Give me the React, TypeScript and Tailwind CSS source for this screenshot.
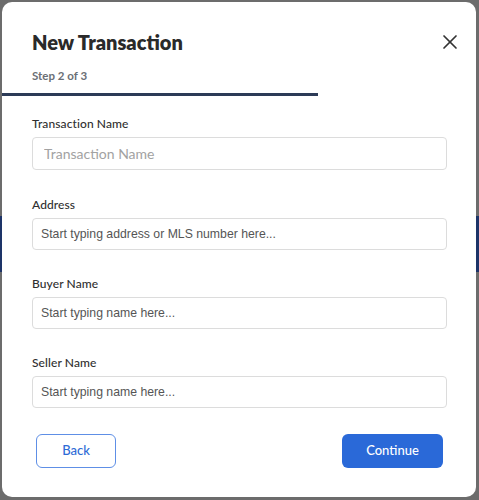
import React from "react";

const Field = ({
  label,
  placeholder,
  first,
  mt,
}: {
  label: string;
  placeholder: string;
  first?: boolean;
  mt: string;
}) => (
  <div className={`flex flex-col ${mt}`}>
    <label className="text-[12px] leading-[18px] font-medium text-[#2f2f2f] font-['Lato',sans-serif] tracking-[0.1px]">
      {label}
    </label>
    <input
      placeholder={placeholder}
      className={
        first
          ? "mt-[4px] h-[33px] w-[415px] rounded-[4px] border border-[#dcdcdc] bg-white px-[11px] text-[14px] font-['Lato',sans-serif] placeholder:text-[#a2a2a2] outline-none"
          : "mt-[4px] h-[32px] w-[415px] rounded-[4px] border border-[#dcdcdc] bg-white px-[8px] text-[12.25px] font-['Liberation_Sans',Arial,sans-serif] placeholder:text-[#555] outline-none"
      }
    />
  </div>
);

export default function App() {
  return (
    <div className="relative w-[479px] h-[500px] overflow-hidden bg-[#6c6c6c]">
      <div className="flex flex-col h-full">
        <div className="h-[216px]" />
        <div className="h-[56px] bg-[#1d3468]" />
        <div className="flex-1" />
      </div>
      <div className="absolute left-[2px] top-[2px] w-[474px] h-[495px] rounded-[10px] bg-white flex flex-col font-['Lato',sans-serif]">
        <div className="flex items-center justify-between pl-[30px] pr-[14px] pt-[26px]">
          <h1 className="text-[20px] leading-[28px] font-extrabold text-[#2a2a2a]">
            New Transaction
          </h1>
          <svg width="24" height="24" viewBox="0 0 24 24" fill="none" stroke="#333" strokeWidth="1.7" strokeLinecap="round">
            <path d="M18 6 6 18" />
            <path d="m6 6 12 12" />
          </svg>
        </div>
        <div className="pl-[30px] mt-[12px] text-[11.5px] leading-[16px] font-bold text-[#6b6f76]">
          Step 2 of 3
        </div>
        <div className="mt-[9px] h-[3px] w-[316px] bg-[#2c3b57]" />
        <div className="pl-[30px] flex flex-col">
          <Field label="Transaction Name" placeholder="Transaction Name" first mt="mt-[19px]" />
          <Field label="Address" placeholder="Start typing address or MLS number here..." mt="mt-[26px]" />
          <Field label="Buyer Name" placeholder="Start typing name here..." mt="mt-[25px]" />
          <Field label="Seller Name" placeholder="Start typing name here..." mt="mt-[25px]" />
        </div>
        <div className="mt-[26px] flex justify-between pl-[34px] pr-[33px]">
          <button className="h-[34px] w-[80px] rounded-[6px] border border-[#5e8fe6] bg-white text-[13px] font-medium text-[#2e6bd6]">
            Back
          </button>
          <button className="h-[34px] w-[101px] rounded-[6px] bg-[#2a69d8] text-[13px] font-medium text-white">
            Continue
          </button>
        </div>
      </div>
    </div>
  );
}
